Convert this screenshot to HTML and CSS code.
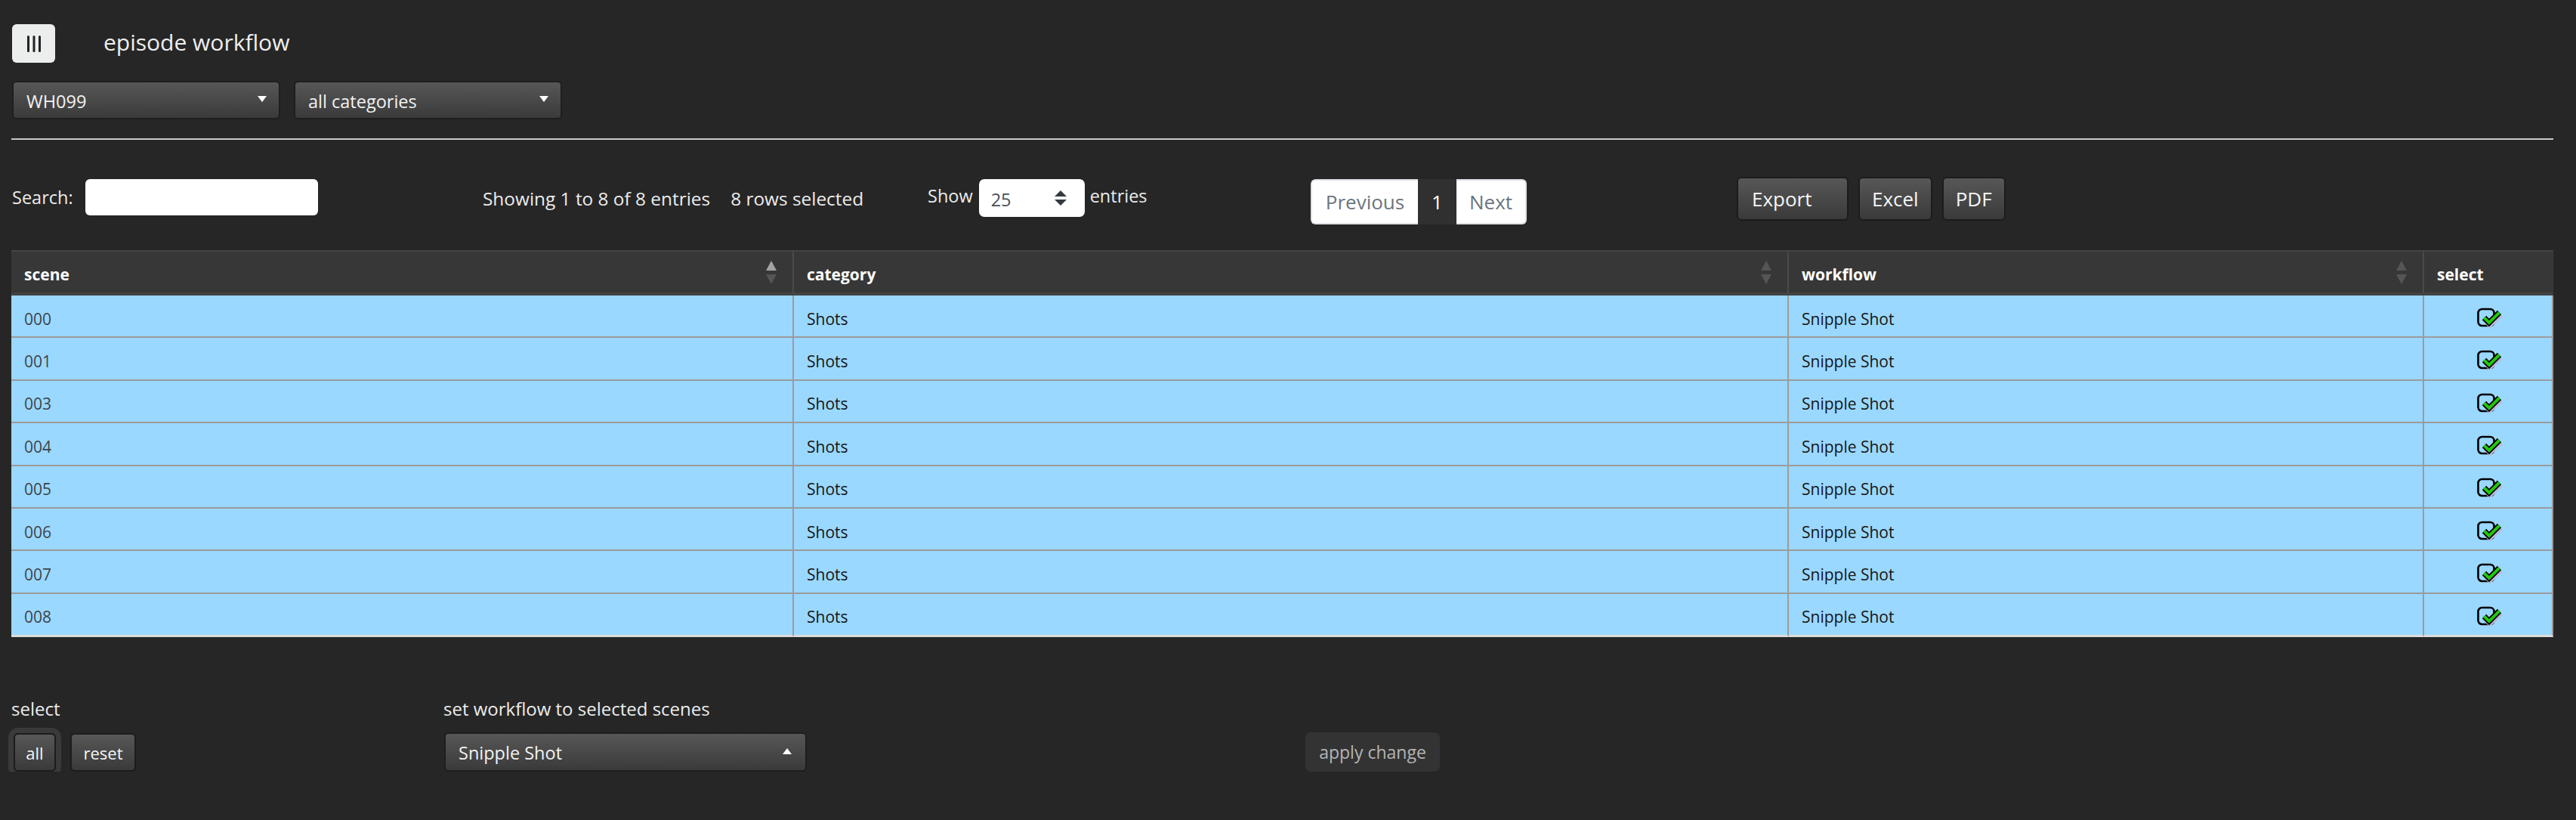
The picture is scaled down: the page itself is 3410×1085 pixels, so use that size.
FILE: index.html
```html
<!DOCTYPE html>
<html lang="en">
<head>
<meta charset="utf-8">
<title>episode workflow</title>
<link rel="stylesheet" href="styles.css">
</head>
<body>
<div class="page">
  <header class="topbar">
    <button class="menu-btn" type="button" aria-label="menu">
      <svg width="18" height="22" viewBox="0 0 18 22"><rect x="0" y="0" width="3" height="22" rx="1.5" fill="#1f2226"/><rect x="7.5" y="0" width="3" height="22" rx="1.5" fill="#1f2226"/><rect x="15" y="0" width="3" height="22" rx="1.5" fill="#1f2226"/></svg>
    </button>
    <h1 class="title">episode workflow</h1>
  </header>

  <div class="filters">
    <div class="dropdown"><span>WH099</span><i class="caret"></i></div>
    <div class="dropdown"><span>all categories</span><i class="caret"></i></div>
  </div>

  <hr class="rule">

  <div class="dt-controls">
    <div class="dt-filter"><label class="lbl">Search:</label><input class="search-input" type="text"></div>
    <div class="dt-info"><span>Showing 1 to 8 of 8 entries</span><span class="sel-count">8 rows selected</span></div>
    <div class="dt-length">
      <span>Show</span>
      <div class="len-select"><span>25</span>
        <svg width="16" height="20" viewBox="0 0 16 20"><path d="M8 0 L16 8 L0 8 Z" fill="#343a40"/><path d="M0 12 L16 12 L8 20 Z" fill="#343a40"/></svg>
      </div>
      <span>entries</span>
    </div>
    <div class="dt-paginate">
      <span class="pg pg-prev">Previous</span><span class="pg pg-cur">1</span><span class="pg pg-next">Next</span>
    </div>
    <div class="dt-buttons">
      <button class="btn btn-export" type="button">Export</button>
      <button class="btn" type="button">Excel</button>
      <button class="btn" type="button">PDF</button>
    </div>
  </div>

  <table class="grid">
    <colgroup>
      <col class="c-scene"><col class="c-cat"><col class="c-wf"><col class="c-sel">
    </colgroup>
    <thead>
      <tr>
        <th class="sortable asc">scene</th>
        <th class="sortable">category</th>
        <th class="sortable">workflow</th>
        <th class="last">select</th>
      </tr>
    </thead>
    <tbody>
      <tr><td class="scene">000</td><td>Shots</td><td>Snipple Shot</td><td class="chk"><svg class="cbx" width="34" height="28" viewBox="0 0 34 28"><use href="#cb"/></svg></td></tr>
      <tr><td class="scene">001</td><td>Shots</td><td>Snipple Shot</td><td class="chk"><svg class="cbx" width="34" height="28" viewBox="0 0 34 28"><use href="#cb"/></svg></td></tr>
      <tr><td class="scene">003</td><td>Shots</td><td>Snipple Shot</td><td class="chk"><svg class="cbx" width="34" height="28" viewBox="0 0 34 28"><use href="#cb"/></svg></td></tr>
      <tr><td class="scene">004</td><td>Shots</td><td>Snipple Shot</td><td class="chk"><svg class="cbx" width="34" height="28" viewBox="0 0 34 28"><use href="#cb"/></svg></td></tr>
      <tr><td class="scene">005</td><td>Shots</td><td>Snipple Shot</td><td class="chk"><svg class="cbx" width="34" height="28" viewBox="0 0 34 28"><use href="#cb"/></svg></td></tr>
      <tr><td class="scene">006</td><td>Shots</td><td>Snipple Shot</td><td class="chk"><svg class="cbx" width="34" height="28" viewBox="0 0 34 28"><use href="#cb"/></svg></td></tr>
      <tr><td class="scene">007</td><td>Shots</td><td>Snipple Shot</td><td class="chk"><svg class="cbx" width="34" height="28" viewBox="0 0 34 28"><use href="#cb"/></svg></td></tr>
      <tr class="lastrow"><td class="scene">008</td><td>Shots</td><td>Snipple Shot</td><td class="chk"><svg class="cbx" width="34" height="28" viewBox="0 0 34 28"><use href="#cb"/></svg></td></tr>
    </tbody>
  </table>

  <div class="actions">
    <div class="act-group">
      <div class="act-label">select</div>
      <div class="act-row">
        <button class="btn btn-sm btn-all btn-focus" type="button">all</button>
        <button class="btn btn-sm btn-reset" type="button">reset</button>
      </div>
    </div>
    <div class="act-group">
      <div class="act-label">set workflow to selected scenes</div>
      <div class="dropdown dropdown-wide"><span>Snipple Shot</span><i class="caret caret-up"></i></div>
    </div>
    <div class="act-group act-apply">
      <button class="btn-apply" type="button">apply change</button>
    </div>
  </div>
</div>

<svg width="0" height="0" style="position:absolute">
  <defs>
    <g id="cb">
      <rect x="1.5" y="2" width="21" height="22" rx="5" fill="none" stroke="#000" stroke-width="2.6"/>
      <polyline points="11,16 17,22 31,9" fill="none" stroke="#b9b9d9" stroke-width="8"/>
      <polyline points="9.5,13.5 16,20 29.5,6.5" fill="none" stroke="#000" stroke-width="7.5"/>
      <polyline points="9.5,13.5 16,20 29.5,6.5" fill="none" stroke="#22c80e" stroke-width="4"/>
    </g>
  </defs>
</svg>
</body>
</html>
```

FILE: styles.css
```css
* { box-sizing: border-box; }

html, body {
  margin: 0;
  padding: 0;
  background: #262626;
}

body {
  font-family: "Open Sans", "Noto Sans", "Liberation Sans", sans-serif;
  color: #ececec;
  font-size: 23px;
}

.page {
  padding: 32px 30px 0 15px;
}

/* top bar */
.topbar {
  display: flex;
  align-items: center;
  height: 51px;
}

.menu-btn {
  width: 57px;
  height: 51px;
  margin-left: 1px;
  border: none;
  border-radius: 6px;
  background: #eceeed;
  display: flex;
  align-items: center;
  justify-content: center;
  padding: 0;
}

.title {
  margin: -4px 0 0 64px;
  font-size: 30px;
  font-weight: 400;
  color: #eeeeee;
  line-height: 40px;
}

/* dropdowns */
.filters {
  display: flex;
  gap: 18px;
  margin-top: 24px;
  margin-left: 1px;
}

.dropdown {
  width: 355px;
  height: 51px;
  border: 2px solid #1e1e1e;
  border-radius: 6px;
  background: linear-gradient(#575757, #3a3a3a);
  display: flex;
  align-items: center;
  justify-content: space-between;
  padding: 2px 16px 0 17px;
  font-size: 23.5px;
  color: #f2f2f2;
}

.caret {
  width: 0;
  height: 0;
  border-left: 6px solid transparent;
  border-right: 6px solid transparent;
  border-top: 8px solid #ffffff;
  margin-top: -5px;
}

.caret-up {
  border-top: none;
  border-bottom: 8px solid #ffffff;
}

.rule {
  margin: 25px 0 0 0;
  border: none;
  border-top: 2px solid #c8c8c8;
  height: 0;
}

/* datatable controls */
.dt-controls {
  display: grid;
  grid-template-columns: 624px 589px 507px 564px auto;
  margin-top: 49px;
  height: 63px;
  align-items: start;
}

.dt-filter {
  display: flex;
  align-items: center;
  margin-top: 3px;
  height: 48px;
  padding-left: 1px;
}

.lbl {
  font-size: 23.5px;
  color: #ececec;
}

.search-input {
  width: 308px;
  height: 48px;
  margin-left: 16px;
  border: none;
  border-radius: 6px;
  background: #ffffff;
  outline: none;
}

.dt-info {
  display: flex;
  align-items: center;
  height: 56px;
  font-size: 24.4px;
  gap: 27px;
}

.dt-length {
  display: flex;
  align-items: center;
  height: 56px;
  font-size: 23.5px;
  margin-top: -3px;
}

.len-select {
  width: 140px;
  height: 50px;
  margin: 6px 7px 0 8px;
  background: #ffffff;
  border-radius: 7px;
  display: flex;
  align-items: center;
  justify-content: space-between;
  padding: 0 24px 0 16px;
  color: #495057;
}

.len-select span { margin-top: 4px; }

.dt-paginate {
  display: flex;
  margin-top: 3px;
  height: 60px;
  border-radius: 6px;
  overflow: hidden;
  font-size: 26px;
}

.pg {
  display: flex;
  align-items: center;
  justify-content: center;
  height: 60px;
  background: #ffffff;
  color: #6c757d;
  border-top: 2px solid #dee2e6;
  border-bottom: 2px solid #dee2e6;
}

.pg-prev {
  width: 142px;
  border-left: 2px solid #dee2e6;
  border-radius: 6px 0 0 6px;
}

.pg-cur {
  width: 51px;
  background: #303030;
  color: #ffffff;
  border-color: #303030;
}

.pg-next {
  width: 93px;
  border-right: 2px solid #dee2e6;
  border-radius: 0 6px 6px 0;
}

.dt-buttons {
  display: flex;
  gap: 13px;
}

.btn {
  height: 58px;
  padding: 0 16px;
  border: 2px solid #1c1c1c;
  border-radius: 6px;
  background: linear-gradient(#575757, #3a3a3a);
  color: #f5f5f5;
  font-family: inherit;
  font-size: 26px;
  display: flex;
  align-items: center;
}

.btn-export {
  width: 148px;
  padding-left: 18px;
}

/* table */
.grid {
  margin-top: 34px;
  width: 3365px;
  border-collapse: separate;
  border-spacing: 0;
  table-layout: fixed;
  font-size: 21px;
}

.c-scene { width: 1036px; }
.c-cat { width: 1317px; }
.c-wf { width: 841px; }
.c-sel { width: 171px; }

.grid th {
  position: relative;
  height: 60px;
  padding: 5px 17px 0 17px;
  text-align: left;
  font-weight: 700;
  font-size: 21px;
  color: #ffffff;
  background: #373737;
  border-top: 2px solid #454545;
  border-bottom: 4px solid #424242;
  border-right: 2px solid #4a4a4a;
}

.grid th.last { border-right: 2px solid #3a3a3a; }

.sortable::before,
.sortable::after {
  content: "";
  position: absolute;
  right: 21px;
  width: 0;
  height: 0;
  border-left: 7px solid transparent;
  border-right: 7px solid transparent;
}

.sortable::before {
  top: 12px;
  border-bottom: 13px solid #555555;
}

.sortable::after {
  top: 30px;
  border-top: 13px solid #555555;
}

.sortable.asc::before { border-bottom-color: #a3a3a3; }

.grid td {
  height: 56.4px;
  padding: 7px 17px 0 17px;
  background: #9ad8ff;
  color: #161616;
  border-bottom: 2px solid #9b9b9b;
  border-right: 2px solid #9b9b9b;
  vertical-align: middle;
}

.grid td.scene {
  color: #3d444b;
}

.grid tr.lastrow td {
  height: 57.4px;
  border-bottom: 3px solid #dddddd;
}

.grid td.chk {
  text-align: center;
  padding: 3px 0 0 4px;
}

.cbx {
  display: inline-block;
  vertical-align: middle;
}

/* bottom actions */
.actions {
  display: grid;
  grid-template-columns: 572px 1141px auto;
  margin-top: 78px;
}

.act-label {
  font-size: 24px;
  line-height: 34px;
  color: #ececec;
  height: 34px;
}

.act-row {
  display: flex;
  gap: 19px;
  margin-top: 15px;
  padding-left: 3px;
}

.btn-sm {
  height: 51px;
  font-size: 22px;
  padding: 0;
  justify-content: center;
}

.btn-all { width: 56px; }
.btn-reset { width: 87px; }

.btn-focus {
  box-shadow: 0 0 0 7px #3a3a3a;
}

.dropdown-wide {
  width: 480px;
  height: 52px;
  margin-top: 14px;
  margin-left: 1px;
  padding-right: 18px;
}

.act-apply {
  padding-top: 48px;
}

.btn-apply {
  width: 178px;
  height: 52px;
  border: none;
  border-radius: 7px;
  background: #333333;
  color: #b4b4b4;
  font-family: inherit;
  font-size: 23px;
  padding: 0;
}
```
